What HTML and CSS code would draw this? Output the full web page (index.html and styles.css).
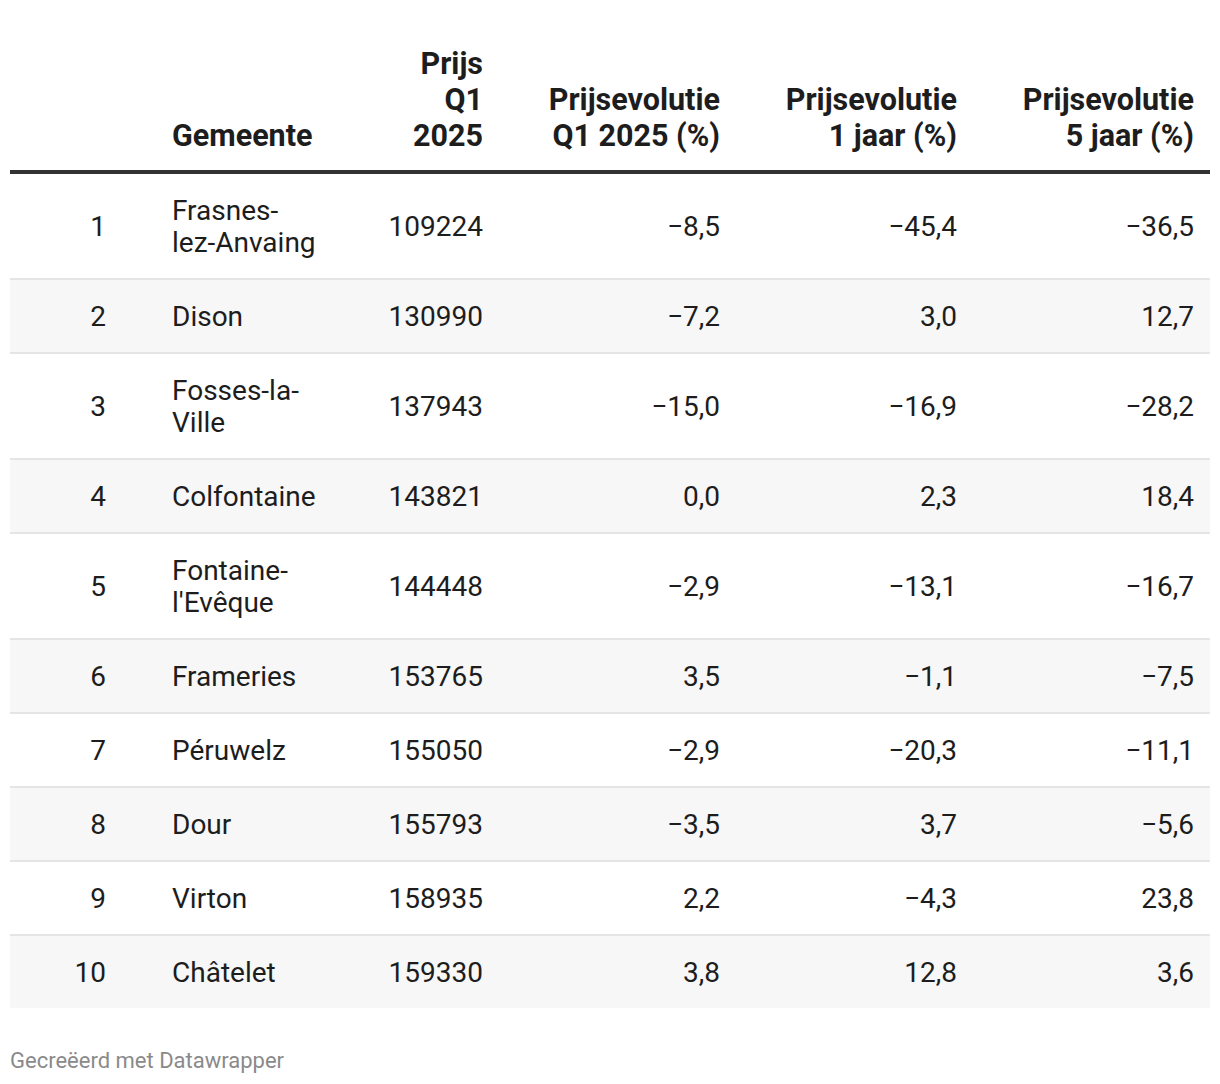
FILE: index.html
```html
<!DOCTYPE html>
<html lang="nl">
<head>
<meta charset="utf-8">
<title>Tabel</title>
<link rel="stylesheet" href="styles.css">
</head>
<body>
<div class="chart">
  <table class="dw-table">
    <thead>
      <tr>
        <th class="c1"></th>
        <th class="c2 left">Gemeente</th>
        <th class="c3">Prijs Q1 2025</th>
        <th class="c4">Prijsevolutie Q1 2025 (%)</th>
        <th class="c5">Prijsevolutie 1 jaar (%)</th>
        <th class="c6">Prijsevolutie 5 jaar (%)</th>
      </tr>
    </thead>
    <tbody>
      <tr><td class="c1">1</td><td class="c2 left">Frasnes-lez-Anvaing</td><td class="c3">109224</td><td>−8,5</td><td>−45,4</td><td>−36,5</td></tr>
      <tr><td class="c1">2</td><td class="c2 left">Dison</td><td class="c3">130990</td><td>−7,2</td><td>3,0</td><td>12,7</td></tr>
      <tr><td class="c1">3</td><td class="c2 left">Fosses-la-Ville</td><td class="c3">137943</td><td>−15,0</td><td>−16,9</td><td>−28,2</td></tr>
      <tr><td class="c1">4</td><td class="c2 left">Colfontaine</td><td class="c3">143821</td><td>0,0</td><td>2,3</td><td>18,4</td></tr>
      <tr><td class="c1">5</td><td class="c2 left">Fontaine-l'Evêque</td><td class="c3">144448</td><td>−2,9</td><td>−13,1</td><td>−16,7</td></tr>
      <tr><td class="c1">6</td><td class="c2 left">Frameries</td><td class="c3">153765</td><td>3,5</td><td>−1,1</td><td>−7,5</td></tr>
      <tr><td class="c1">7</td><td class="c2 left">Péruwelz</td><td class="c3">155050</td><td>−2,9</td><td>−20,3</td><td>−11,1</td></tr>
      <tr><td class="c1">8</td><td class="c2 left">Dour</td><td class="c3">155793</td><td>−3,5</td><td>3,7</td><td>−5,6</td></tr>
      <tr><td class="c1">9</td><td class="c2 left">Virton</td><td class="c3">158935</td><td>2,2</td><td>−4,3</td><td>23,8</td></tr>
      <tr><td class="c1">10</td><td class="c2 left">Châtelet</td><td class="c3">159330</td><td>3,8</td><td>12,8</td><td>3,6</td></tr>
    </tbody>
  </table>
  <div class="footer">Gecreëerd met Datawrapper</div>
</div>
</body>
</html>
```

FILE: styles.css
```css
* { box-sizing: border-box; }
html, body { margin: 0; padding: 0; background: #ffffff; }
body {
  font-family: Roboto, "Liberation Sans", sans-serif;
  color: #1d1d1d;
}
.chart {
  padding: 46px 10px 0 10px;
}
.dw-table {
  width: 1200px;
  border-collapse: collapse;
  table-layout: fixed;
  font-size: 28px;
}
.dw-table th {
  font-size: 30.5px;
  font-weight: 700;
  line-height: 36px;
  text-align: right;
  vertical-align: bottom;
  padding: 0 16px 16px 40px;
  border-bottom: 4px solid #333333;
  width: 237px;
}
.dw-table td {
  text-align: right;
  line-height: 32px;
  vertical-align: middle;
  padding: 21px 16px 19px 16px;
  border-bottom: 2px solid #e5e5e5;
}
.dw-table tbody tr:nth-child(even) td { background: #f7f7f7; }
.dw-table tbody tr:last-child td { border-bottom: none; }
.dw-table .c1 { width: 130px; padding-left: 16px; padding-right: 34px; }
.dw-table .c2 { width: 229px; padding-left: 32px; padding-right: 52px; }
.dw-table .c3 { width: 130px; padding-left: 16px; padding-right: 16px; }
.dw-table .left { text-align: left; }
.footer {
  margin-top: 40px;
  font-size: 22px;
  color: #8a8a8a;
}
```
